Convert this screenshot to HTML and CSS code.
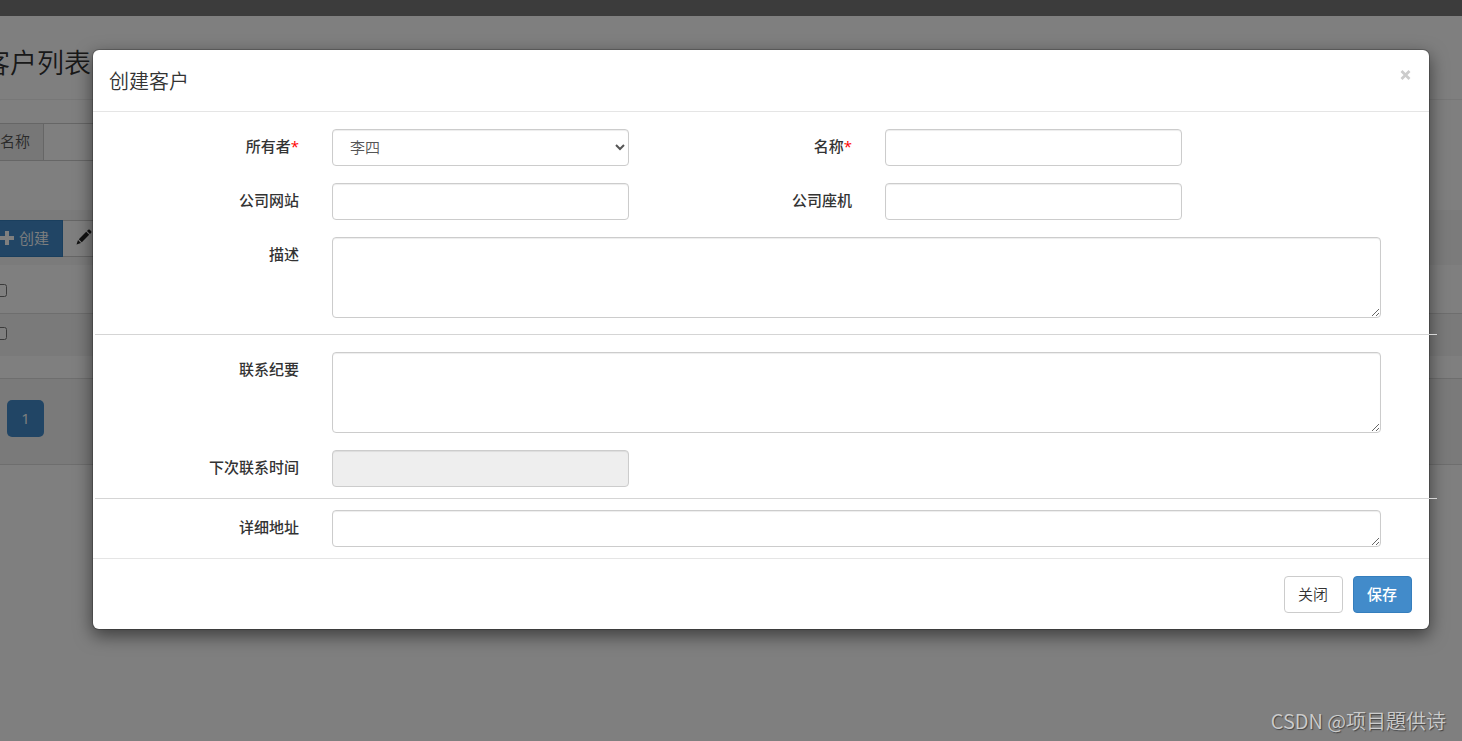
FILE: index.html
```html
<!DOCTYPE html>
<html lang="zh-CN">
<head>
    <meta charset="UTF-8">
    <title>客户列表</title>
    <link rel="stylesheet" href="styles.css">
</head>
<body>
    <div class="topbar"></div>

    <!-- customer list -->
    <div class="page">
        <div class="page-header">
            <h3>客户列表</h3>
        </div>
        <form class="search">
            <label class="addon" for="search-name">名称</label>
            <input class="search-input" type="text" id="search-name">
        </form>
        <div class="toolbar">
            <button type="button" class="btn btn-primary btn-create">
                <svg width="14" height="14" viewBox="0 0 14 14"><path d="M5 0h4v5h5v4H9v5H5V9H0V5h5z" fill="currentColor"/></svg>
                创建
            </button>
            <button type="button" class="btn btn-default btn-edit" aria-label="修改">
                <svg width="16" height="16" viewBox="0 0 16 16"><path d="M0.500 15.500l1.500-4.500 3 3zM2.800 10.200l7.400-7.400 3 3-7.400 7.400zM11 2l1.200-1.200q.8-.6 1.600 0l1.400 1.400q.6.8 0 1.600L14 5z" fill="#222"/></svg>
            </button>
        </div>
        <div class="row row-first"><input type="checkbox" aria-label="选择"></div>
        <div class="row row-odd"><input type="checkbox" aria-label="选择"></div>
        <div class="pager">
            <a class="page-link" href="#">1</a>
        </div>
    </div>

    <!-- create customer modal -->
    <div class="backdrop">
        <div class="modal" role="dialog" aria-labelledby="modal-title">
            <div class="modal-header">
                <h4 id="modal-title">创建客户</h4>
                <button type="button" class="close" aria-label="关闭窗口">
                    <svg width="11" height="10" viewBox="0 0 11 10"><path d="M1.500 1l8 8M9.500 1l-8 8" stroke="#ccc" stroke-width="2.800"/></svg>
                </button>
            </div>
            <form class="modal-body">
                <div class="form-group">
                    <label for="create-owner">所有者<span class="required">*</span></label>
                    <select class="form-control" id="create-owner">
                        <option>李四</option>
                    </select>
                    <label for="create-name">名称<span class="required">*</span></label>
                    <input type="text" class="form-control" id="create-name">
                </div>
                <div class="form-group">
                    <label for="create-website">公司网站</label>
                    <input type="text" class="form-control" id="create-website">
                    <label for="create-phone">公司座机</label>
                    <input type="text" class="form-control" id="create-phone">
                </div>
                <div class="form-group">
                    <label for="create-describe">描述</label>
                    <textarea class="form-control wide" id="create-describe"></textarea>
                </div>
                <hr>
                <div class="form-group">
                    <label for="create-summary">联系纪要</label>
                    <textarea class="form-control wide" id="create-summary"></textarea>
                </div>
                <div class="form-group">
                    <label for="create-next-time">下次联系时间</label>
                    <input type="text" class="form-control" id="create-next-time" readonly>
                </div>
                <hr class="tight">
                <div class="form-group">
                    <label for="create-address">详细地址</label>
                    <textarea class="form-control wide one-line" id="create-address"></textarea>
                </div>
            </form>
            <div class="modal-footer">
                <button type="button" class="btn btn-default">关闭</button>
                <button type="button" class="btn btn-primary">保存</button>
            </div>
        </div>
    </div>

    <div class="watermark">CSDN @项目題供诗</div>
</body>
</html>
```
FILE: styles.css
```css
* {
    box-sizing: border-box;
}

body {
    margin: 0;
    min-height: 100vh;
    position: relative;
    overflow: hidden;
    background-color: #fff;
    color: #333;
    font-family: "Noto Sans CJK SC", sans-serif;
    font-weight: 350;
    font-size: 15px;
    line-height: 21px;
}

input, select, textarea, button {
    font-family: inherit;
    font-size: inherit;
    font-weight: inherit;
    line-height: inherit;
}

h3, h4 {
    margin: 0;
    font-weight: 350;
}

.topbar {
    height: 16px;
    background-color: #787878;
}

/* list page, scrolled a little to the right */
.page {
    margin-left: -17px;
}

.page-header {
    height: 84px;
    padding-top: 27px;
    border-bottom: 1px solid #eee;
}

.page-header h3 {
    font-size: 27px;
    line-height: 38px;
}

.search {
    display: flex;
    height: 38px;
    margin: 23px 0 49px;
}

.addon {
    width: 61px;
    padding: 6px 13px 0 0;
    text-align: right;
    color: #555;
    background-color: #eee;
    border: 1px solid #ccc;
}

.search-input {
    width: 200px;
    border: 1px solid #ccc;
    border-left: 0;
}

.toolbar {
    display: flex;
    height: 55px;
    padding-top: 10px;
    background-color: #f7f7f7;
}

.btn {
    height: 37px;
    padding: 0 14px 3px 13px;
    border: 1px solid #ccc;
    border-radius: 4px;
    background-color: #fff;
    color: #333;
    cursor: pointer;
}

.btn-primary {
    background-color: #428bca;
    border-color: #357ebd;
    color: #fff;
    font-weight: 500;
}

.btn-create {
    display: flex;
    align-items: center;
    gap: 5px;
    width: 80px;
    padding: 0 13px 2px 16px;
    border-radius: 0;
    font-weight: 350;
}

.btn-edit {
    padding-bottom: 0;
    border-left: 0;
    border-radius: 0;
}

.row {
    display: flex;
    align-items: center;
    height: 43px;
    padding-left: 11px;
}

.row input {
    margin: 0;
}

.row-first {
    height: 49px;
    padding-top: 2px;
    border-bottom: 1px solid #ddd;
}

.row-odd {
    height: 42px;
    padding-bottom: 4px;
    background-color: #f4f4f4;
}

.pager {
    height: 87px;
    margin-top: 22px;
    padding: 21px 24px;
    background-color: #f4f4f4;
    border-top: 1px solid #ddd;
    border-bottom: 1px solid #ddd;
}

.page-link {
    display: block;
    width: 37px;
    height: 37px;
    border-radius: 5px;
    background-color: #428bca;
    color: #fff;
    font-family: "Open Sans", sans-serif;
    font-weight: 400;
    line-height: 36px;
    text-align: center;
    text-decoration: none;
}

.backdrop {
    position: absolute;
    inset: 0;
    padding: 49px 32px 0 92px;
    background-color: rgba(0, 0, 0, 0.5);
}

.modal {
    background-color: #fff;
    background-clip: padding-box;
    border: 1px solid rgba(0, 0, 0, 0.2);
    border-radius: 7px;
    box-shadow: 0 6px 17px rgba(0, 0, 0, 0.5);
}

.modal-header {
    display: flex;
    justify-content: space-between;
    padding: 16px;
    border-bottom: 1px solid #e5e5e5;
}

.modal-header h4 {
    font-size: 20px;
    line-height: 29px;
}

.close {
    display: flex;
    height: 18px;
    padding: 4px 2px;
    border: 0;
    background: none;
    cursor: pointer;
}

.modal-body {
    padding: 17px 48px 11px 17px;
}

.form-group {
    display: grid;
    grid-template-columns: 189fr 297fr 190fr 297fr 166fr;
    column-gap: 33px;
}

.form-group + .form-group {
    margin-top: 17px;
}

.form-group label {
    padding-top: 6px;
    font-weight: 500;
    text-align: right;
}

.required {
    color: red;
    font-family: "Open Sans", sans-serif;
    font-weight: 400;
}

.form-control {
    width: 100%;
    height: 37px;
    padding: 5px 13px 7px;
    border: 1px solid #ccc;
    border-radius: 4px;
    background-color: #fff;
    color: #555;
    box-shadow: inset 0 1px 1px rgba(0, 0, 0, 0.075);
}

.form-control[readonly] {
    background-color: #eee;
}

textarea.form-control {
    display: block;
    height: 81px;
    resize: vertical;
}

textarea.one-line {
    height: 37px;
}

.wide {
    grid-column: 2 / -1;
}

/* the rules run past the modal's right edge */
hr {
    height: 1px;
    margin: 16px -56px 17px -15px;
    border: 0;
    background-color: #d5d5d5;
}

hr.tight {
    margin-top: 11px;
    margin-bottom: 11px;
}

.modal-footer {
    display: flex;
    justify-content: flex-end;
    gap: 10px;
    padding: 17px 17px 16px;
    border-top: 1px solid #e5e5e5;
}

.watermark {
    position: absolute;
    right: 16px;
    bottom: 6px;
    color: #ccc;
    font-size: 20px;
    line-height: 28px;
    text-shadow: 1px 1px 1px #444;
}
```
